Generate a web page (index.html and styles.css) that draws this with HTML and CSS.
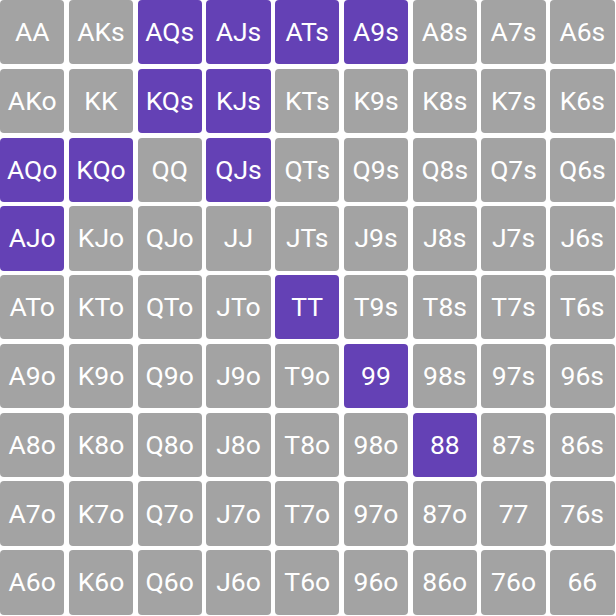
FILE: index.html
```html
<!DOCTYPE html>
<html>
<head>
<meta charset="utf-8">
<link rel="stylesheet" href="styles.css">
</head>
<body>
<div class="grid">
<div class="cell">AA</div><div class="cell">AKs</div><div class="cell on">AQs</div><div class="cell on">AJs</div><div class="cell on">ATs</div><div class="cell on">A9s</div><div class="cell">A8s</div><div class="cell">A7s</div><div class="cell">A6s</div>
<div class="cell">AKo</div><div class="cell">KK</div><div class="cell on">KQs</div><div class="cell on">KJs</div><div class="cell">KTs</div><div class="cell">K9s</div><div class="cell">K8s</div><div class="cell">K7s</div><div class="cell">K6s</div>
<div class="cell on">AQo</div><div class="cell on">KQo</div><div class="cell">QQ</div><div class="cell on">QJs</div><div class="cell">QTs</div><div class="cell">Q9s</div><div class="cell">Q8s</div><div class="cell">Q7s</div><div class="cell">Q6s</div>
<div class="cell on">AJo</div><div class="cell">KJo</div><div class="cell">QJo</div><div class="cell">JJ</div><div class="cell">JTs</div><div class="cell">J9s</div><div class="cell">J8s</div><div class="cell">J7s</div><div class="cell">J6s</div>
<div class="cell">ATo</div><div class="cell">KTo</div><div class="cell">QTo</div><div class="cell">JTo</div><div class="cell on">TT</div><div class="cell">T9s</div><div class="cell">T8s</div><div class="cell">T7s</div><div class="cell">T6s</div>
<div class="cell">A9o</div><div class="cell">K9o</div><div class="cell">Q9o</div><div class="cell">J9o</div><div class="cell">T9o</div><div class="cell on">99</div><div class="cell">98s</div><div class="cell">97s</div><div class="cell">96s</div>
<div class="cell">A8o</div><div class="cell">K8o</div><div class="cell">Q8o</div><div class="cell">J8o</div><div class="cell">T8o</div><div class="cell">98o</div><div class="cell on">88</div><div class="cell">87s</div><div class="cell">86s</div>
<div class="cell">A7o</div><div class="cell">K7o</div><div class="cell">Q7o</div><div class="cell">J7o</div><div class="cell">T7o</div><div class="cell">97o</div><div class="cell">87o</div><div class="cell">77</div><div class="cell">76s</div>
<div class="cell">A6o</div><div class="cell">K6o</div><div class="cell">Q6o</div><div class="cell">J6o</div><div class="cell">T6o</div><div class="cell">96o</div><div class="cell">86o</div><div class="cell">76o</div><div class="cell">66</div>
</div>
</body>
</html>
```
FILE: styles.css
```css
html, body {
  margin: 0;
  padding: 0;
  background: #ffffff;
}
.grid {
  width: 614.5px;
  height: 614.5px;
  display: grid;
  grid-template-columns: repeat(9, 1fr);
  grid-template-rows: repeat(9, 1fr);
  gap: 4.4px;
}
.cell {
  background: #a3a3a3;
  border-radius: 4px;
  color: #ffffff;
  font-family: Roboto, "Noto Sans", sans-serif;
  font-size: 26.5px;
  display: flex;
  align-items: center;
  justify-content: center;
  padding-bottom: 1px;
}
.cell.on {
  background: #6441b5;
}
```
